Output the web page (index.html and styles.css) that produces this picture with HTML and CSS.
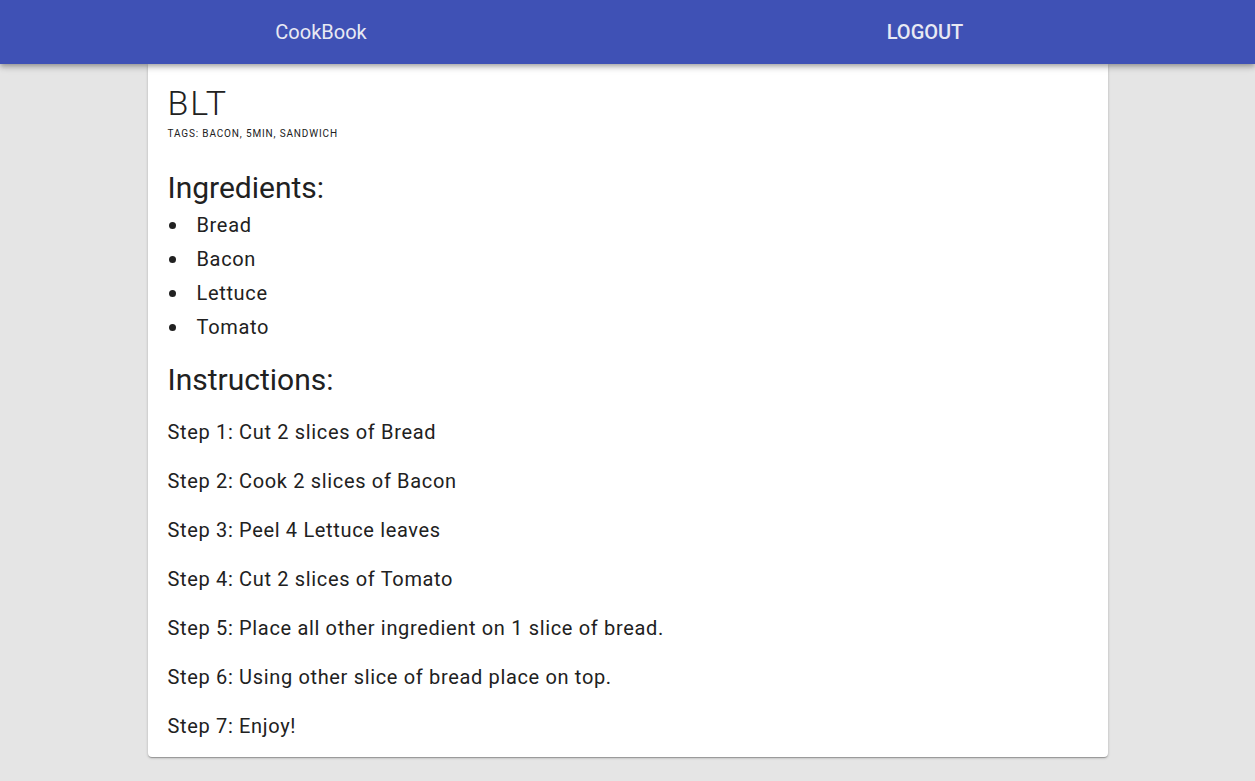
FILE: index.html
```html
<!DOCTYPE html>
<html>
<head>
<meta charset="utf-8">
<link rel="stylesheet" href="styles.css">
</head>
<body>
<header class="appbar">
  <div class="brand-cell"><span class="brand">CookBook</span></div>
  <div class="action-cell"><span class="logout">LOGOUT</span></div>
</header>
<main class="page">
  <article class="card">
    <h1 class="title">BLT</h1>
    <div class="tags">Tags: bacon, 5min, sandwich</div>
    <h2 class="section section-first">Ingredients:</h2>
    <ul class="ingredients">
      <li>Bread</li>
      <li>Bacon</li>
      <li>Lettuce</li>
      <li>Tomato</li>
    </ul>
    <h2 class="section section-second">Instructions:</h2>
    <div class="steps">
      <p class="step">Step 1: Cut 2 slices of Bread</p>
      <p class="step">Step 2: Cook 2 slices of Bacon</p>
      <p class="step">Step 3: Peel 4 Lettuce leaves</p>
      <p class="step">Step 4: Cut 2 slices of Tomato</p>
      <p class="step">Step 5: Place all other ingredient on 1 slice of bread.</p>
      <p class="step">Step 6: Using other slice of bread place on top.</p>
      <p class="step">Step 7: Enjoy!</p>
    </div>
  </article>
</main>
</body>
</html>
```
FILE: styles.css
```css
html, body {
  margin: 0;
  padding: 0;
}
body {
  background: #e5e5e5;
  font-family: Roboto, "Liberation Sans", sans-serif;
  color: #212121;
  min-height: 781px;
}
.appbar {
  position: relative;
  z-index: 2;
  height: 64px;
  background: #3f51b5;
  display: flex;
  align-items: center;
  box-shadow: 0 2px 4px -1px rgba(0,0,0,0.2), 0 4px 5px 0 rgba(0,0,0,0.14), 0 1px 10px 0 rgba(0,0,0,0.12);
}
.brand-cell {
  width: 642px;
  display: flex;
  justify-content: center;
}
.action-cell {
  width: 566px;
  display: flex;
  justify-content: center;
}
.brand {
  color: #e8e9f3;
  font-size: 20px;
  font-weight: 400;
}
.logout {
  color: #e8e9f3;
  font-size: 20px;
  font-weight: 500;
}
.page {
  display: flex;
  justify-content: center;
}
.card {
  width: 920px;
  background: #fff;
  padding: 18px 20px 0;
  border-radius: 0 0 4px 4px;
  box-shadow: 0 1px 3px 0 rgba(0,0,0,0.2), 0 1px 1px 0 rgba(0,0,0,0.14), 0 2px 1px -1px rgba(0,0,0,0.12);
}
.title {
  margin: 0;
  font-size: 34px;
  font-weight: 300;
  line-height: 42px;
  letter-spacing: 2px;
}
.tags {
  font-size: 10px;
  text-transform: uppercase;
  letter-spacing: 0.85px;
  line-height: 14px;
  margin-top: 3px;
}
.section {
  margin: 0;
  font-size: 30px;
  font-weight: 400;
  line-height: 36px;
}
.section-first {
  margin-top: 29px;
}
.section-second {
  margin-top: 18px;
}
.ingredients {
  list-style: none;
  margin: 0;
  padding: 0;
  font-size: 20px;
  letter-spacing: 0.66px;
}
.ingredients li {
  display: flex;
  align-items: center;
  line-height: 34px;
}
.ingredients li::before {
  content: "";
  width: 7px;
  height: 7px;
  border-radius: 50%;
  background: #212121;
  margin: 1px 21px 0 1px;
}
.ingredients li:first-child {
  margin-top: 2px;
}
.steps {
  padding: 10px 0 6px;
}
.step {
  margin: 0;
  font-size: 20px;
  line-height: 49px;
  letter-spacing: 0.66px;
}
```
